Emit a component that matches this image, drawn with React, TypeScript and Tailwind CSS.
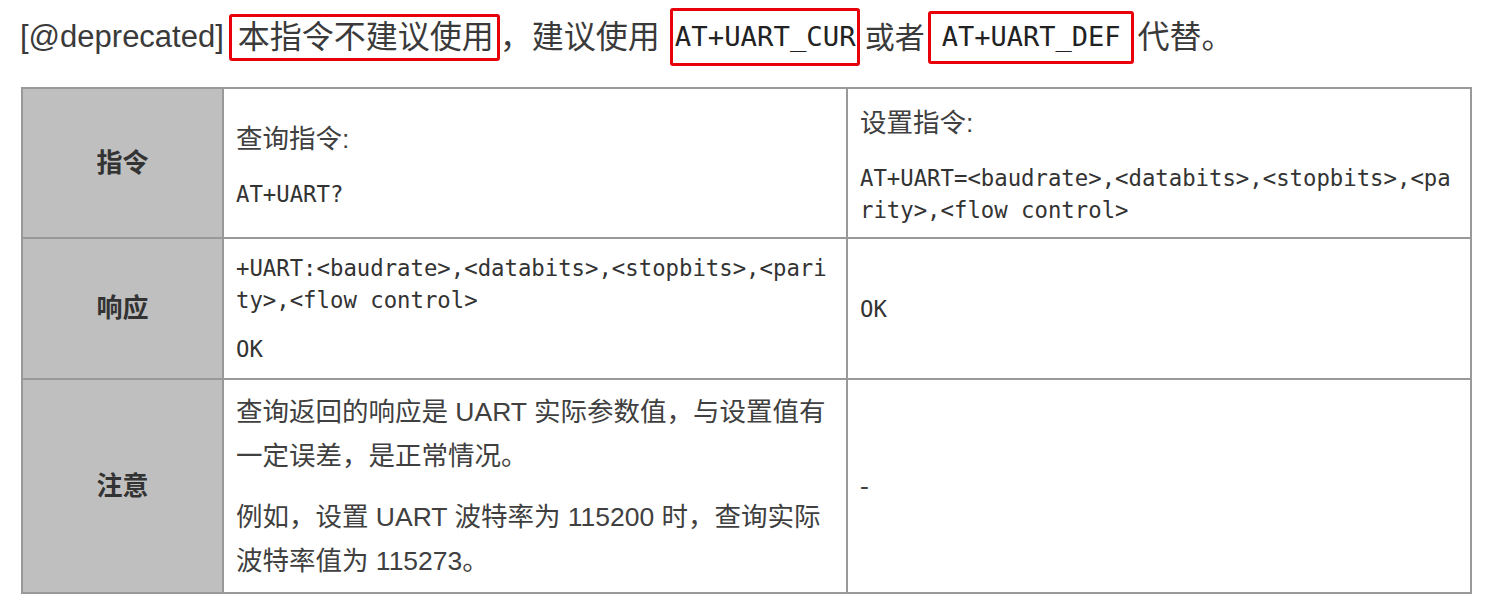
const sans = "font-['Liberation_Sans','Noto_Sans_CJK_SC',sans-serif]";
const mono = "font-['DejaVu_Sans_Mono','Noto_Sans_CJK_SC',monospace]";

function Label({ text }: { text: string }) {
  return (
    <td className="border-2 border-[#999] bg-[#bfbfbf] text-center align-middle">
      <span className="text-[26px] font-bold text-[#333]">{text}</span>
    </td>
  );
}

function Cell({ children }: { children: React.ReactNode }) {
  return (
    <td className="border-2 border-[#999] px-3 align-middle">
      <div className="flex flex-col gap-[17px]">{children}</div>
    </td>
  );
}

function Code({ lines }: { lines: string[] }) {
  return (
    <div className={`${mono} text-[22.3px] leading-[32px] text-[#333] whitespace-pre`}>
      {lines.map((l) => (
        <div key={l}>{l}</div>
      ))}
    </div>
  );
}

function Text({ lines }: { lines: string[] }) {
  return (
    <div className="text-[26.5px] leading-[44px] text-[#404040] whitespace-nowrap">
      {lines.map((l) => (
        <div key={l}>{l}</div>
      ))}
    </div>
  );
}

export default function App() {
  return (
    <div className={`${sans} bg-white w-[1490px] h-[613px] overflow-hidden`}>
      {/* deprecation notice */}
      <div className="flex items-center h-[74px] pl-[20px] text-[#3a3a3a]">
        <span className="text-[31px] mr-[5px]">[@deprecated]</span>
        <span className="h-[47px] flex items-center border-[3px] border-[#e8000b] rounded-[3px] pl-[6px] pr-[3px] text-[32px]">
          本指令不建议使用
        </span>
        <span className="text-[32px]">，建议使用</span>
        <span className={`${mono} ml-[10px] h-[58px] flex items-center border-[3px] border-[#e8000b] rounded-[3px] pl-[2px] pr-[1px] text-[27.3px] text-[#222]`}>
          AT+UART_CUR
        </span>
        <span className="text-[30px] ml-[5px]">或者</span>
        <span className={`${mono} ml-[3px] h-[53px] flex items-center border-[3px] border-[#e8000b] rounded-[3px] px-[11px] text-[27px] text-[#222]`}>
          AT+UART_DEF
        </span>
        <span className="text-[32px] ml-[3px]">代替。</span>
      </div>

      <table className="ml-[21px] mt-[13px] w-[1451px] table-fixed border-collapse">
        <colgroup>
          <col className="w-[201px]" />
          <col className="w-[624px]" />
          <col className="w-[624px]" />
        </colgroup>
        <tbody>
          <tr className="h-[150px]">
            <Label text="指令" />
            <Cell>
              <Text lines={["查询指令:"]} />
              <Code lines={["AT+UART?"]} />
            </Cell>
            <Cell>
              <Text lines={["设置指令:"]} />
              <Code lines={["AT+UART=<baudrate>,<databits>,<stopbits>,<pa", "rity>,<flow control>"]} />
            </Cell>
          </tr>
          <tr className="h-[141px]">
            <Label text="响应" />
            <Cell>
              <Code lines={["+UART:<baudrate>,<databits>,<stopbits>,<pari", "ty>,<flow control>"]} />
              <Code lines={["OK"]} />
            </Cell>
            <Cell>
              <Code lines={["OK"]} />
            </Cell>
          </tr>
          <tr className="h-[214px]">
            <Label text="注意" />
            <Cell>
              <Text lines={["查询返回的响应是 UART 实际参数值，与设置值有", "一定误差，是正常情况。"]} />
              <Text lines={["例如，设置 UART 波特率为 115200 时，查询实际", "波特率值为 115273。"]} />
            </Cell>
            <Cell>
              <Text lines={["-"]} />
            </Cell>
          </tr>
        </tbody>
      </table>
    </div>
  );
}
